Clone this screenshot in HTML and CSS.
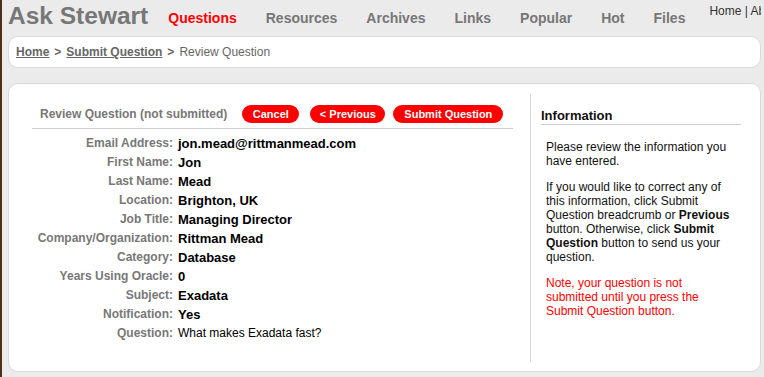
FILE: index.html
```html
<!DOCTYPE html>
<html>
<head>
<meta charset="utf-8">
<title>Ask Stewart - Review Question</title>
<link rel="stylesheet" href="styles.css">
</head>
<body>
<div class="page">
  <header class="header">
    <div class="logo">Ask Stewart</div>
    <nav class="nav">
      <a class="nav-item active">Questions</a>
      <a class="nav-item">Resources</a>
      <a class="nav-item">Archives</a>
      <a class="nav-item">Links</a>
      <a class="nav-item">Popular</a>
      <a class="nav-item">Hot</a>
      <a class="nav-item">Files</a>
    </nav>
    <div class="toplinks">Home | About | Contact</div>
  </header>

  <div class="crumbs">
    <a class="crumb-link">Home</a><span class="sep">&gt;</span><a class="crumb-link">Submit Question</a><span class="sep">&gt;</span><span class="crumb-current">Review Question</span>
  </div>

  <div class="main">
    <div class="left">
      <div class="review-head">
        <span class="review-title">Review Question (not submitted)</span>
        <span class="btn btn-cancel">Cancel</span>
        <span class="btn btn-prev">&lt; Previous</span>
        <span class="btn btn-submit">Submit Question</span>
      </div>
      <div class="fields">
        <div class="label">Email Address:</div><div class="value">jon.mead@rittmanmead.com</div>
        <div class="label">First Name:</div><div class="value">Jon</div>
        <div class="label">Last Name:</div><div class="value">Mead</div>
        <div class="label">Location:</div><div class="value">Brighton, UK</div>
        <div class="label">Job Title:</div><div class="value">Managing Director</div>
        <div class="label">Company/Organization:</div><div class="value">Rittman Mead</div>
        <div class="label">Category:</div><div class="value">Database</div>
        <div class="label">Years Using Oracle:</div><div class="value">0</div>
        <div class="label">Subject:</div><div class="value">Exadata</div>
        <div class="label">Notification:</div><div class="value">Yes</div>
        <div class="label">Question:</div><div class="value value-plain">What makes Exadata fast?</div>
      </div>
    </div>
    <aside class="info">
      <h2 class="info-title">Information</h2>
      <p class="info-text">Please review the information you have entered.</p>
      <p class="info-text">If you would like to correct any of this information, click Submit Question breadcrumb or <b>Previous</b> button. Otherwise, click <b>Submit Question</b> button to send us your question.</p>
      <p class="info-text info-note">Note, your question is not submitted until you press the Submit Question button.</p>
    </aside>
  </div>
</div>
</body>
</html>
```

FILE: styles.css
```css
html, body {
  margin: 0;
  padding: 0;
}
body {
  background: #ebebeb;
  border-left: 2px solid #4e2e1a;
  font-family: "Liberation Sans", Arial, Helvetica, sans-serif;
  overflow: hidden;
  min-height: 377px;
  box-sizing: border-box;
}
.page {
  padding: 0 3px 0 6px;
}
.header {
  display: flex;
  align-items: flex-start;
  height: 36px;
  white-space: nowrap;
  overflow: hidden;
}
.logo {
  flex-shrink: 0;
  font-size: 24.5px;
  line-height: 30px;
  padding-top: 1px;
  font-weight: bold;
  color: #777;
}
.nav {
  display: flex;
  flex-shrink: 0;
  gap: 29px;
  margin-left: 20px;
  margin-top: 10px;
}
.nav-item {
  font-size: 14px;
  line-height: 16px;
  font-weight: bold;
  color: #777;
}
.nav-item.active {
  color: #f00;
}
.toplinks {
  flex-shrink: 0;
  margin-left: 24px;
  margin-top: 4px;
  font-size: 12px;
  line-height: 14px;
  color: #333;
}
.crumbs {
  box-sizing: border-box;
  height: 32px;
  background: #fff;
  border: 1px solid #d9d9d9;
  border-radius: 10px;
  padding-left: 7px;
  font-size: 12px;
  line-height: 30px;
  color: #666;
}
.crumb-link {
  font-weight: bold;
  color: #666;
  text-decoration: underline;
}
.sep {
  font-weight: bold;
  margin: 0 5px;
}
.crumb-current {
  color: #666;
}
.main {
  box-sizing: border-box;
  margin-top: 15px;
  height: 289px;
  background: #fff;
  border: 1px solid #d9d9d9;
  border-radius: 10px;
  padding: 10px 0 9px 0;
  display: flex;
}
.left {
  box-sizing: border-box;
  width: 522px;
  border-right: 1px solid #d6d6d6;
  padding: 0 17px 0 23px;
}
.review-head {
  display: flex;
  align-items: center;
  margin-top: 11px;
  height: 18px;
  padding: 0 0 5px 8px;
  border-bottom: 1px solid #cfcfcf;
}
.review-title {
  font-size: 12px;
  line-height: 18px;
  font-weight: bold;
  color: #777;
}
.btn {
  box-sizing: border-box;
  height: 18px;
  line-height: 18px;
  border-radius: 9px;
  background: #f00;
  color: #fff;
  font-size: 11px;
  font-weight: bold;
  text-align: center;
}
.btn-cancel {
  width: 57px;
  margin-left: 15px;
}
.btn-prev {
  width: 75px;
  margin-left: 11px;
}
.btn-submit {
  width: 110px;
  margin-left: 8px;
}
.fields {
  display: grid;
  grid-template-columns: 141px 1fr;
  column-gap: 5px;
  padding-top: 5px;
}
.label {
  text-align: right;
  font-size: 12px;
  line-height: 19px;
  font-weight: bold;
  color: #777;
}
.value {
  font-size: 13px;
  line-height: 19px;
  font-weight: bold;
  color: #000;
}
.value-plain {
  font-size: 12px;
  font-weight: normal;
}
.info {
  box-sizing: border-box;
  padding-left: 10px;
  width: 210px;
}
.info-title {
  margin: 0;
  padding-top: 14px;
  padding-bottom: 1px;
  width: 200px;
  font-size: 13px;
  line-height: 15px;
  font-weight: bold;
  color: #111;
  border-bottom: 1px solid #cfcfcf;
}
.info-text {
  margin: 0 0 12px 5px;
  width: 188px;
  font-size: 12px;
  line-height: 14px;
  color: #111;
}
.info-title + .info-text {
  margin-top: 15px;
}
.info-note {
  color: #f00;
}
```
